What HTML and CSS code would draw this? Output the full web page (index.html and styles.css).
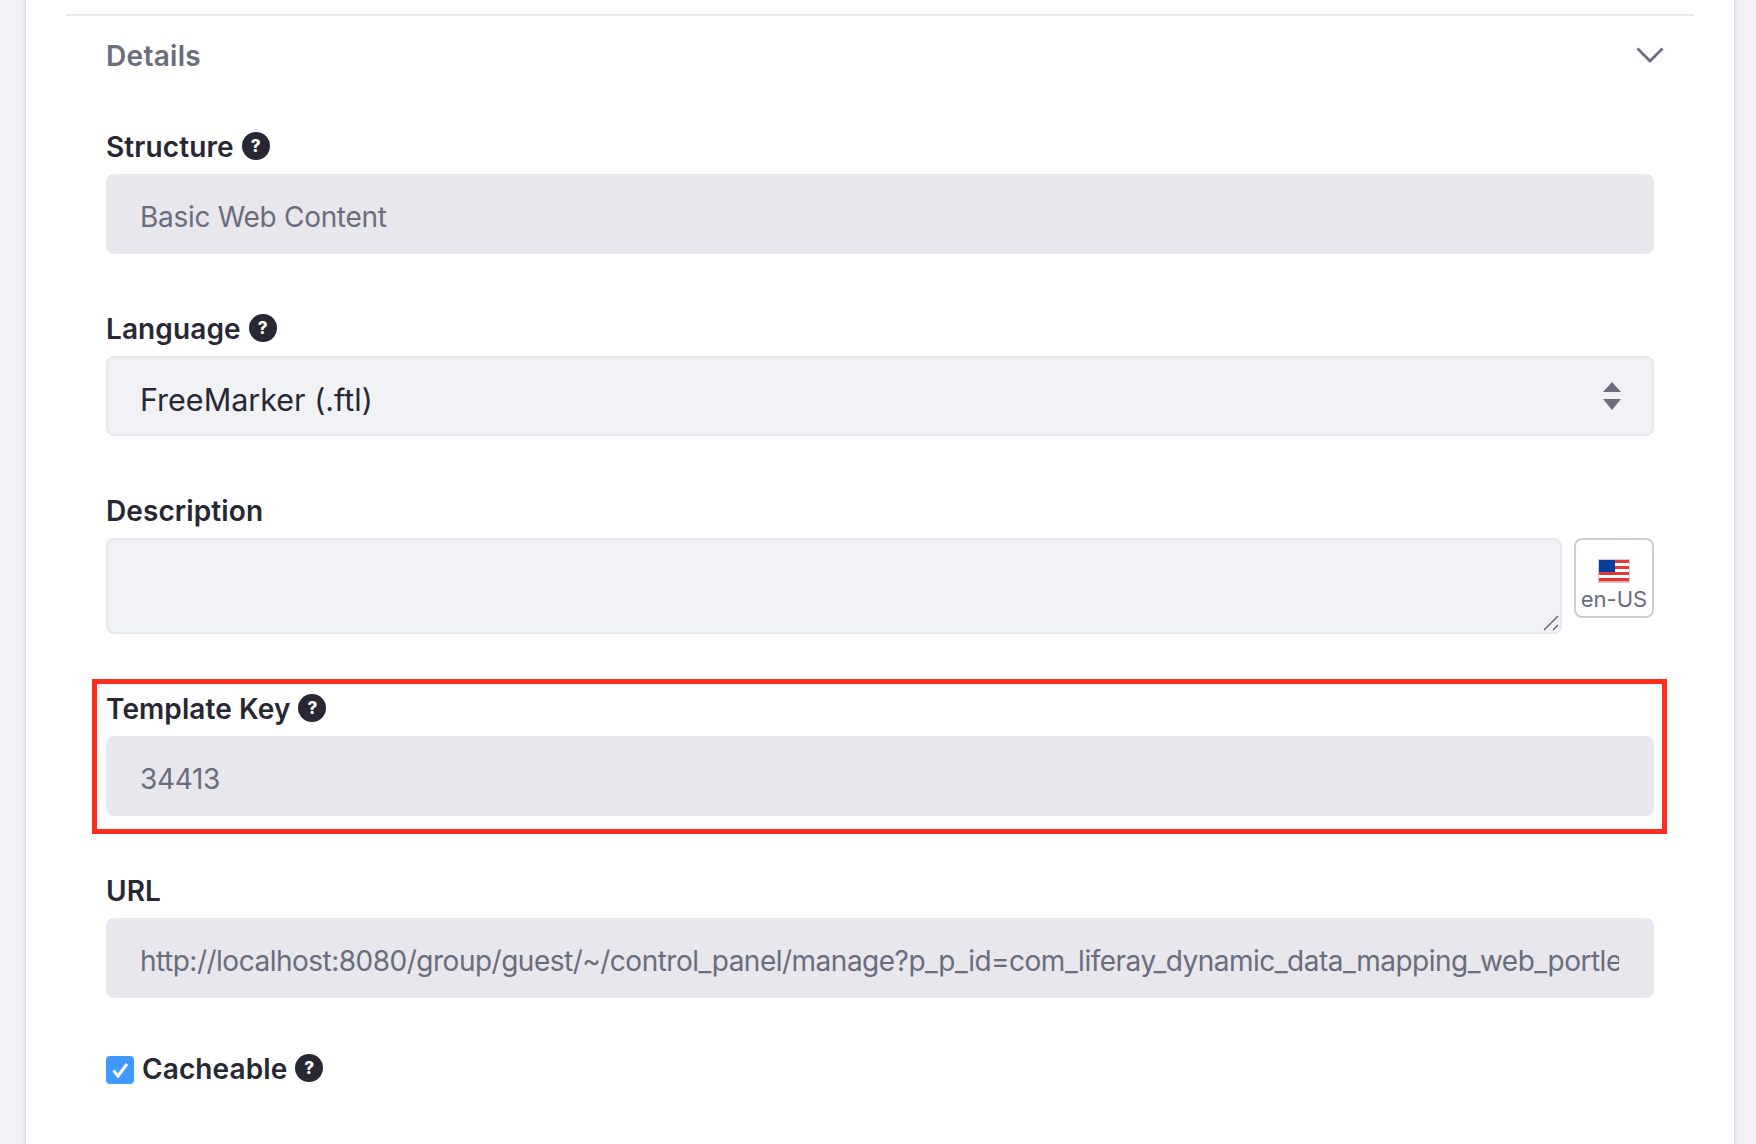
FILE: index.html
```html
<!DOCTYPE html>
<html>
<head>
  <title>Template Details</title>
  <link rel="stylesheet" href="styles.css">
</head>
<body>
  <div class="sheet">
    <div class="sheet-section">
      <div class="panel-header">
        <span class="panel-title">Details</span>
        <svg class="chevron" viewBox="0 0 28 16" width="28" height="16"><path d="M1.5 1.5 14 14 26.5 1.5" fill="none" stroke="#6b6c7e" stroke-width="2.8"/></svg>
      </div>

      <div class="form-group">
        <label class="form-label">Structure <span class="help">?</span></label>
        <input class="form-control" type="text" value="Basic Web Content" readonly>
      </div>

      <div class="form-group">
        <label class="form-label">Language <span class="help">?</span></label>
        <div class="form-select">
          <span>FreeMarker (.ftl)</span>
          <svg class="select-arrows" viewBox="0 0 18 28" width="18" height="28"><path d="M9 0 18 10H0Z M0 17H18L9 28Z" fill="#6b6c7e"/></svg>
        </div>
      </div>

      <div class="form-group">
        <label class="form-label">Description</label>
        <div class="localized">
          <div class="textarea-wrap">
            <textarea class="form-textarea"></textarea>
            <svg class="grip" viewBox="0 0 16 16" width="16" height="16"><path d="M1 15 15 1 M10 15 15 10" fill="none" stroke="#555" stroke-width="1.2"/></svg>
          </div>
          <div class="lang-btn">
            <svg class="flag" viewBox="0 0 32 24" width="32" height="24">
              <rect width="32" height="24" fill="#cdced9"/>
              <rect x="1" y="1" width="30" height="22" fill="#fff"/>
              <rect x="1" y="1" width="30" height="3" fill="#e53935"/>
              <rect x="1" y="7" width="30" height="3" fill="#e53935"/>
              <rect x="1" y="13" width="30" height="3" fill="#e53935"/>
              <rect x="1" y="19" width="30" height="3.5" fill="#e53935"/>
              <rect x="1" y="1" width="16" height="12" fill="#0b3d9c"/>
            </svg>
            <span>en-US</span>
          </div>
        </div>
      </div>

      <div class="form-group highlighted">
        <label class="form-label">Template Key <span class="help">?</span></label>
        <input class="form-control" type="text" value="34413" readonly>
        <div class="red-box"></div>
      </div>

      <div class="form-group">
        <label class="form-label">URL</label>
        <input class="form-control url-control" type="text" value="http://localhost:8080/group/guest/~/control_panel/manage?p_p_id=com_liferay_dynamic_data_mapping_web_portlet_DDMPortlet&amp;p_p_lifecycle=0" readonly>
      </div>

      <div class="check-row">
        <span class="checkbox">
          <svg viewBox="0 0 28 28" width="28" height="28"><path d="M7.5 14.5 12 20 21 8" fill="none" stroke="#fff" stroke-width="3"/></svg>
        </span>
        <span class="form-label check-label">Cacheable <span class="help">?</span></span>
      </div>
    </div>
  </div>
</body>
</html>
```

FILE: styles.css
```css
html, body {
  height: 100%;
}
body {
  margin: 0;
  overflow: hidden;
  background-color: #f1f2f5;
  font-family: Inter, "Liberation Sans", sans-serif;
  color: #272833;
}
.sheet {
  height: 100%;
  margin: 0 22px 0 26px;
  padding: 14px 40px 0;
  box-sizing: border-box;
  background-color: #fff;
  box-shadow: 0 0 4px rgba(39, 40, 51, 0.25);
}
.sheet-section {
  border-top: 2px solid #e7e7ed;
  padding: 0 40px;
}
.panel-header {
  display: flex;
  justify-content: space-between;
  align-items: center;
  height: 80px;
  margin-right: -10px;
  margin-bottom: 36px;
}
.panel-title {
  font-size: 28px;
  font-weight: 600;
  letter-spacing: 0.3px;
  color: #6b6c7e;
}
.chevron {
  margin-top: -2px;
}
.form-group {
  margin-bottom: 60px;
}
.form-label {
  display: flex;
  align-items: flex-start;
  gap: 8px;
  height: 28px;
  margin-bottom: 14px;
  font-size: 28px;
  font-weight: 600;
  line-height: 30px;
  letter-spacing: 0.1px;
}
.help {
  display: inline-flex;
  align-items: center;
  justify-content: center;
  width: 28px;
  height: 28px;
  border-radius: 50%;
  background-color: #272833;
  color: #fff;
  font-size: 17px;
  font-weight: 800;
  line-height: 28px;
}
.form-control {
  display: block;
  width: 100%;
  height: 80px;
  padding: 6px 35px 0 34px;
  border: none;
  border-radius: 8px;
  box-sizing: border-box;
  background-color: #e7e7ed;
  font-family: inherit;
  font-size: 28px;
  letter-spacing: -0.3px;
  color: #6b6c7e;
  outline: none;
}
.url-control {
  letter-spacing: -0.5px;
}
.form-select {
  display: flex;
  justify-content: space-between;
  align-items: center;
  height: 80px;
  padding: 6px 31px 0 32px;
  border: 2px solid #e7e7ed;
  border-radius: 8px;
  box-sizing: border-box;
  background-color: #f1f2f5;
  font-size: 30.5px;
}
.select-arrows {
  margin-top: -6px;
}
.localized {
  display: flex;
  align-items: flex-start;
  gap: 12px;
}
.textarea-wrap {
  flex: 1;
  position: relative;
  height: 96px;
}
.form-textarea {
  display: block;
  width: 100%;
  height: 100%;
  border: 2px solid #e7e7ed;
  border-radius: 8px;
  box-sizing: border-box;
  background-color: #f1f2f5;
  outline: none;
  resize: none;
}
.grip {
  position: absolute;
  right: 3px;
  bottom: 3px;
}
.lang-btn {
  display: flex;
  flex-direction: column;
  align-items: center;
  width: 80px;
  height: 80px;
  padding-top: 19px;
  border: 2px solid #cdced9;
  border-radius: 8px;
  box-sizing: border-box;
  font-size: 22px;
  line-height: 32px;
  color: #6b6c7e;
}
.flag {
  flex: none;
}
.highlighted {
  position: relative;
}
.red-box {
  position: absolute;
  top: -15px;
  left: -14px;
  right: -13px;
  bottom: -18px;
  border: 5px solid #ff2d1f;
  pointer-events: none;
}
.check-row {
  display: flex;
  align-items: flex-start;
  gap: 8px;
  margin-top: -4px;
}
.checkbox {
  display: block;
  width: 28px;
  height: 28px;
  margin-top: 2px;
  border-radius: 4px;
  background-color: #3f99ff;
}
.check-label {
  margin-bottom: 0;
}
```
